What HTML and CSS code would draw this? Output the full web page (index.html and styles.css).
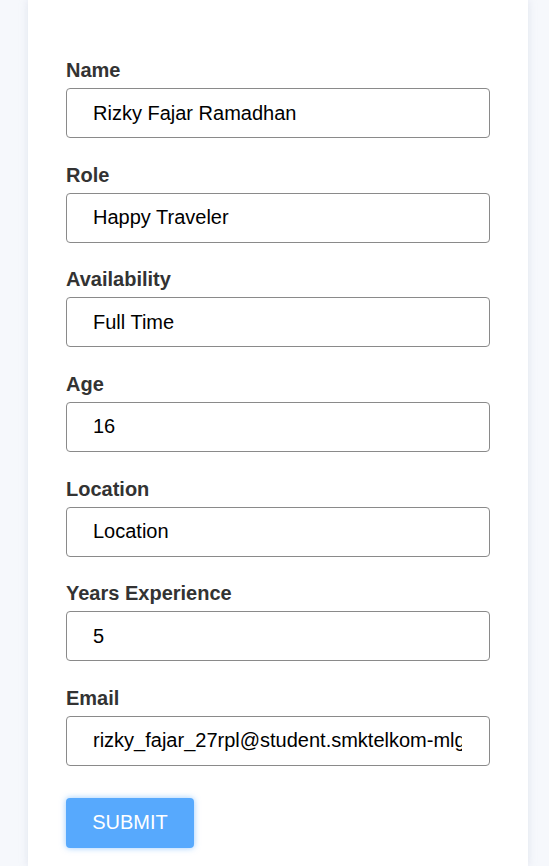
FILE: index.html
```html
<!DOCTYPE html>
<html>
<head>
<meta charset="utf-8">
<link rel="stylesheet" href="styles.css">
</head>
<body>
<div class="card">
  <form class="form">
    <div class="group">
      <label class="label">Name</label>
      <input class="input" type="text" value="Rizky Fajar Ramadhan">
    </div>
    <div class="group">
      <label class="label">Role</label>
      <input class="input" type="text" value="Happy Traveler">
    </div>
    <div class="group">
      <label class="label">Availability</label>
      <input class="input" type="text" value="Full Time">
    </div>
    <div class="group">
      <label class="label">Age</label>
      <input class="input" type="text" value="16">
    </div>
    <div class="group">
      <label class="label">Location</label>
      <input class="input" type="text" value="Location">
    </div>
    <div class="group">
      <label class="label">Years Experience</label>
      <input class="input" type="text" value="5">
    </div>
    <div class="group">
      <label class="label">Email</label>
      <input class="input" type="text" value="rizky_fajar_27rpl@student.smktelkom-mlg.sch.id">
    </div>
    <button class="submit" type="button">SUBMIT</button>
  </form>
</div>
</body>
</html>
```
FILE: styles.css
```css
html, body {
  margin: 0;
  padding: 0;
}
body {
  background: #f6f8fc;
  font-family: "Liberation Sans", Arial, sans-serif;
  height: 866px;
  overflow: hidden;
}
.card {
  width: 500px;
  margin-left: 28px;
  background: #ffffff;
  box-shadow: 0 0 8px rgba(180, 190, 210, 0.35);
  min-height: 866px;
  box-sizing: border-box;
  padding: 59px 38px 0 38px;
}
.form {
  display: flex;
  flex-direction: column;
}
.group {
  display: flex;
  flex-direction: column;
  margin-bottom: 25.67px;
}
.label {
  font-size: 20px;
  line-height: 23px;
  font-weight: bold;
  color: #333333;
  margin-bottom: 6px;
}
.input {
  box-sizing: border-box;
  width: 424px;
  height: 50px;
  border: 1px solid #8a8a8a;
  border-radius: 4px;
  padding: 0 27px 0 26px;
  font-family: "Liberation Sans", Arial, sans-serif;
  font-size: 20px;
  color: #000;
  background: #fff;
  outline: none;
}
.submit {
  margin-top: 6.33px;
  width: 128px;
  height: 50px;
  border: none;
  border-radius: 4px;
  background: #57a9fd;
  color: #ffffff;
  font-family: "Liberation Sans", Arial, sans-serif;
  font-size: 20px;
  box-shadow: 0 0 6px rgba(87, 169, 253, 0.6);
  cursor: pointer;
}
```
